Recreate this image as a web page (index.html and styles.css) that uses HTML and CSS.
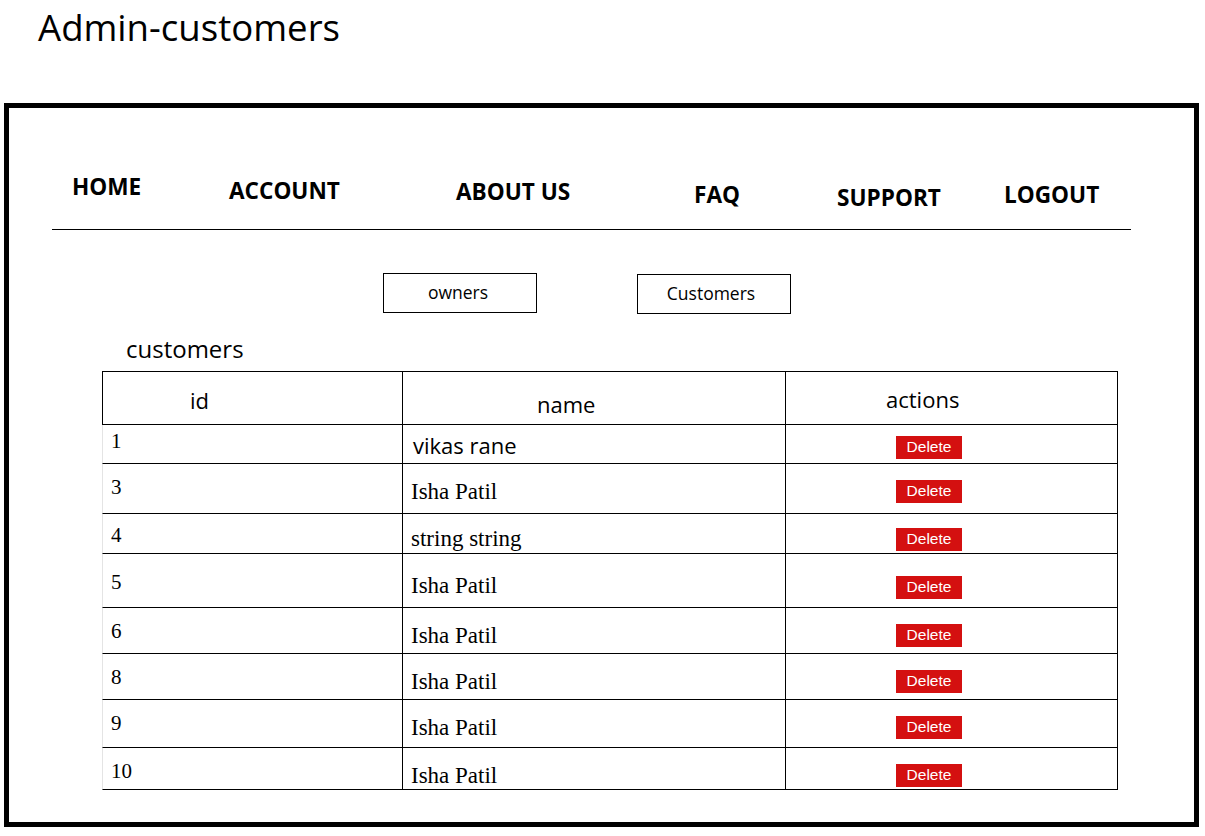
FILE: index.html
```html
<!DOCTYPE html>
<html lang="en">
<head>
<meta charset="utf-8">
<title>Admin-customers</title>
<link rel="stylesheet" href="styles.css">
</head>
<body>
<h1 class="page-title">Admin-customers</h1>
<div class="frame">
  <nav class="topnav">
    <a href="#" class="nav-link nav-home">HOME</a>
    <a href="#" class="nav-link nav-account">ACCOUNT</a>
    <a href="#" class="nav-link nav-about">ABOUT US</a>
    <a href="#" class="nav-link nav-faq">FAQ</a>
    <a href="#" class="nav-link nav-support">SUPPORT</a>
    <a href="#" class="nav-link nav-logout">LOGOUT</a>
  </nav>
  <div class="switcher">
    <button class="tab tab-owners">owners</button>
    <button class="tab tab-customers">Customers</button>
  </div>
  <h2 class="section-label">customers</h2>
  <table class="customers-table">
    <thead>
      <tr>
        <th class="th-id">id</th>
        <th class="th-name">name</th>
        <th class="th-actions">actions</th>
      </tr>
    </thead>
    <tbody>
      <tr>
        <td class="cell-id">1</td>
        <td class="cell-name name-sans">vikas rane</td>
        <td class="cell-actions"><button class="btn-delete">Delete</button></td>
      </tr>
      <tr>
        <td class="cell-id">3</td>
        <td class="cell-name">Isha Patil</td>
        <td class="cell-actions"><button class="btn-delete">Delete</button></td>
      </tr>
      <tr>
        <td class="cell-id">4</td>
        <td class="cell-name">string string</td>
        <td class="cell-actions"><button class="btn-delete">Delete</button></td>
      </tr>
      <tr>
        <td class="cell-id">5</td>
        <td class="cell-name">Isha Patil</td>
        <td class="cell-actions"><button class="btn-delete">Delete</button></td>
      </tr>
      <tr>
        <td class="cell-id">6</td>
        <td class="cell-name">Isha Patil</td>
        <td class="cell-actions"><button class="btn-delete">Delete</button></td>
      </tr>
      <tr>
        <td class="cell-id">8</td>
        <td class="cell-name">Isha Patil</td>
        <td class="cell-actions"><button class="btn-delete">Delete</button></td>
      </tr>
      <tr>
        <td class="cell-id">9</td>
        <td class="cell-name">Isha Patil</td>
        <td class="cell-actions"><button class="btn-delete">Delete</button></td>
      </tr>
      <tr>
        <td class="cell-id">10</td>
        <td class="cell-name">Isha Patil</td>
        <td class="cell-actions"><button class="btn-delete">Delete</button></td>
      </tr>
    </tbody>
  </table>
</div>
</body>
</html>
```
FILE: styles.css
```css
* { box-sizing: border-box; }

body {
  margin: 0;
  background: #fff;
  color: #000;
  font-family: "Open Sans", "Noto Sans", sans-serif;
}

.page-title {
  margin: 0;
  padding: 5px 0 0 38px;
  font-size: 36.6px;
  font-weight: 400;
  line-height: 44px;
}

.frame {
  margin: 54px 0 0 4px;
  width: 1195px;
  border: 5px solid #000;
  padding-bottom: 32px;
}

/* top navigation */
.topnav {
  display: grid;
  grid-template-columns: 157px 227px 238px 143px 167px auto;
  align-items: start;
  margin-left: 43px;
  width: 1079px;
  padding: 67px 0 19px 20px;
  border-bottom: 1px solid #000;
}

.nav-link {
  color: #000;
  text-decoration: none;
  font-weight: 700;
  font-size: 22.6px;
  line-height: 24px;
}

.nav-account { margin-top: 4px; }
.nav-about { margin-top: 5px; }
.nav-faq { margin-top: 8px; }
.nav-support { margin-top: 11px; }
.nav-logout { margin-top: 8px; }

/* owners / customers switch */
.switcher {
  display: flex;
  align-items: flex-start;
  gap: 100px;
  margin-top: 43px;
  padding-left: 374px;
}

.tab {
  width: 154px;
  height: 40px;
  border: 1px solid #000;
  background: #fff;
  color: #000;
  padding: 0 0 3px 0;
  font-family: "Open Sans", "Noto Sans", sans-serif;
  font-size: 17.5px;
}

.tab-owners { padding-left: 0; padding-right: 4px; }
.tab-customers { margin-top: 1px; padding-right: 6px; }

.section-label {
  margin: 21px 0 0 117px;
  font-size: 24px;
  font-weight: 400;
  line-height: 28px;
}

/* table */
.customers-table {
  margin: 8px 0 0 93px;
  width: 1016px;
  table-layout: fixed;
  border-collapse: separate;
  border-spacing: 0;
  border-top: 1px solid #000;
}

.customers-table th,
.customers-table td {
  padding: 0;
  text-align: left;
  vertical-align: top;
  border-right: 1px solid #000;
  border-bottom: 1px solid #000;
}

.customers-table thead tr { height: 53px; }

.customers-table th {
  font-size: 22px;
  font-weight: 400;
  line-height: 24px;
  padding-top: 16px;
}

.th-id { width: 301px; border-left: 1px solid #000; padding-left: 87px !important; }
.th-name { width: 383px; padding-left: 134px !important; padding-top: 20px !important; }
.th-actions { width: 332px; padding-left: 100px !important; padding-top: 15px !important; }

.cell-id {
  border-left: 1px solid #e4e4e4;
  padding: 11px 0 0 8px !important;
  font-family: "Liberation Serif", "Times New Roman", serif;
  font-size: 21px;
  line-height: 24px;
}

.cell-name {
  padding: 15px 0 0 8px !important;
  font-family: "Liberation Serif", "Times New Roman", serif;
  font-size: 23px;
  line-height: 26px;
}

.cell-name.name-sans {
  font-family: "Open Sans", "Noto Sans", sans-serif;
  font-size: 22px;
  line-height: 24px;
  padding-left: 10px !important;
}

.cell-actions {
  padding: 16px 0 0 110px !important;
}

.btn-delete {
  display: block;
  width: 66px;
  height: 23px;
  border: 0;
  padding: 0 0 2px 0;
  background: #d41010;
  color: #fff;
  font-family: "Liberation Sans", Arial, sans-serif;
  font-size: 15.5px;
  line-height: 21px;
}

/* row heights (as drawn in the mockup) */
.customers-table tbody tr:nth-child(1) { height: 39px; }
.customers-table tbody tr:nth-child(2) { height: 50px; }
.customers-table tbody tr:nth-child(3) { height: 40px; }
.customers-table tbody tr:nth-child(4) { height: 54px; }
.customers-table tbody tr:nth-child(5) { height: 46px; }
.customers-table tbody tr:nth-child(6) { height: 46px; }
.customers-table tbody tr:nth-child(7) { height: 48px; }
.customers-table tbody tr:nth-child(8) { height: 40px; }

.customers-table tbody tr:nth-child(1) .cell-id { padding-top: 4px !important; }
.customers-table tbody tr:nth-child(1) .cell-name { padding-top: 8px !important; }
.customers-table tbody tr:nth-child(1) .cell-actions { padding-top: 11px !important; }

.customers-table tbody tr:nth-child(3) .cell-id { padding-top: 9px !important; }
.customers-table tbody tr:nth-child(3) .cell-name { padding-top: 12px !important; }
.customers-table tbody tr:nth-child(3) .cell-actions { padding-top: 14px !important; }

.customers-table tbody tr:nth-child(4) .cell-id { padding-top: 16px !important; }
.customers-table tbody tr:nth-child(4) .cell-name { padding-top: 19px !important; }
.customers-table tbody tr:nth-child(4) .cell-actions { padding-top: 22px !important; }
```
